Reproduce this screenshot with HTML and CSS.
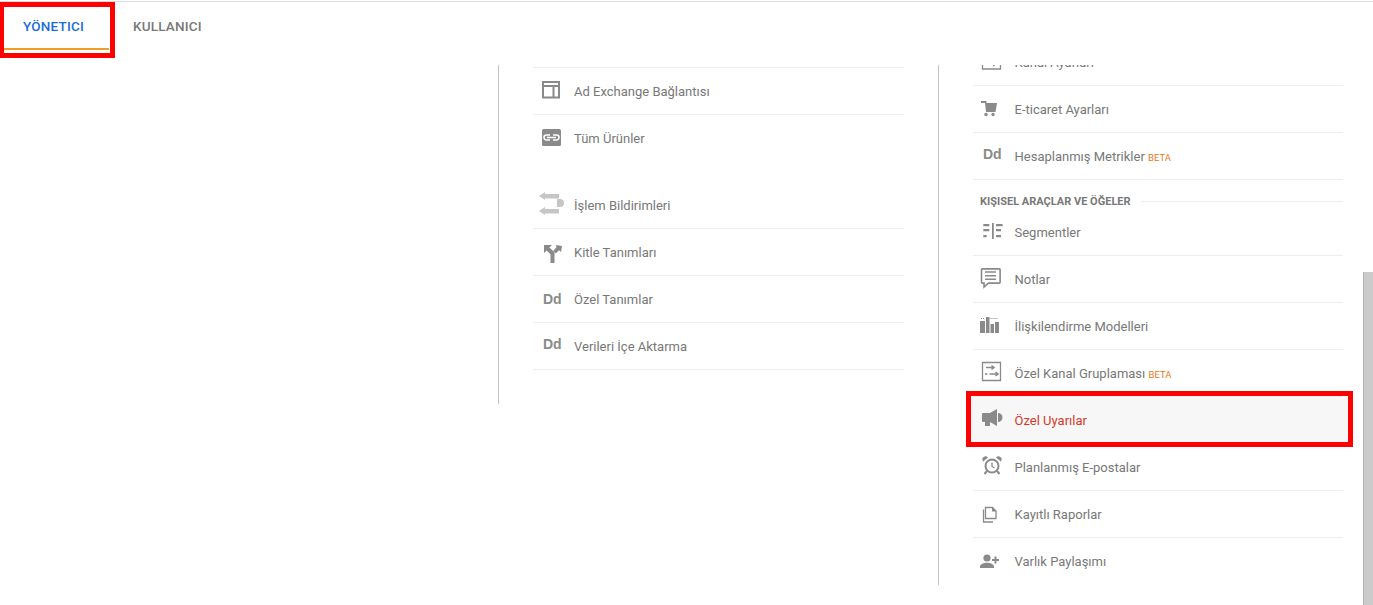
FILE: index.html
```html
<!DOCTYPE html>
<html lang="tr">
<head>
<meta charset="utf-8">
<title>Yönetici</title>
<link rel="stylesheet" href="styles.css">
</head>
<body>
<header class="tabs">
  <div class="tab tab-active">YÖNETICI</div>
  <div class="tab">KULLANICI</div>
</header>
<main class="main">
  <div class="spacer"></div>
  <section class="col col-property">
    <ul class="list list-first">
      <li class="row">
        <svg class="icon" viewBox="0 0 24 24"><path class="line" d="M3 3h16v15.500H3zM3 7h16M13.500 7v11.500"/></svg>
        <span>Ad Exchange Bağlantısı</span>
      </li>
      <li class="row row-last">
        <svg class="icon" viewBox="0 0 24 24"><rect class="fill" x="2" y="2" width="19" height="17" rx="1.500"/><path class="knock" d="M10 8H6.500a2.500 2.500 0 0 0 0 5H10M13 8h3.500a2.500 2.500 0 0 1 0 5H13M7 10.500h9"/></svg>
        <span>Tüm Ürünler</span>
      </li>
    </ul>
    <ul class="list list-second">
      <li class="row">
        <svg class="icon" viewBox="0 0 24 24"><path class="pale" d="M-1 3l6-4v2h14v4.500H5V7zM24 10a4 4 0 0 1-4 4h-3V6h3a4 4 0 0 1 4 4zM-1 18l6-4v2h14v4.500H5V22z"/></svg>
        <span>İşlem Bildirimleri</span>
      </li>
      <li class="row">
        <svg class="icon" viewBox="0 0 24 24"><path class="fill" d="M4 5h8l-2.600 2.600 5.100 4.700V23h-4v-8.800L6.600 10.400 4 13zM16 5l6 1-1 6-2-1.800-3.200 3.200-2.400-2.600 3-3.600z"/></svg>
        <span>Kitle Tanımları</span>
      </li>
      <li class="row">
        <span class="dd">Dd</span>
        <span>Özel Tanımlar</span>
      </li>
      <li class="row">
        <span class="dd dd-up">Dd</span>
        <span>Verileri İçe Aktarma</span>
      </li>
    </ul>
  </section>
  <section class="col col-view">
    <ul class="list list-scrolled">
      <li class="row">
        <svg class="icon" viewBox="0 0 24 24"><path class="line thin" d="M2.500 1h18v18h-18zM7 14h8M13 12l2.500 2-2.500 2M14 6h4M16 4l2 2-2 2"/></svg>
        <span>Kanal Ayarları</span>
      </li>
      <li class="row">
        <svg class="icon" viewBox="0 0 24 24"><path class="fill" d="M1 4h5.500v2H17l-1.500 9H6L5 6H1z"/><circle class="fill" cx="6" cy="17.500" r="1.700"/><circle class="fill" cx="13" cy="17.500" r="1.700"/></svg>
        <span>E-ticaret Ayarları</span>
      </li>
      <li class="row">
        <span class="dd dd-up">Dd</span>
        <span>Hesaplanmış Metrikler <em class="beta">BETA</em></span>
      </li>
    </ul>
    <div class="heading"><span>KIŞISEL ARAÇLAR VE ÖĞELER</span></div>
    <ul class="list">
      <li class="row">
        <svg class="icon" viewBox="0 0 24 24"><path class="fill" d="M3.300 4h6v2.200h-6zM3.300 9h6v2.200h-6zM3.300 15h3.300v2.200H3.300zM12 3h1.800v16H12zM16 4h6.600v2.200H16zM16 9h5v2.200h-5zM16 15h5v2.200h-5z"/></svg>
        <span>Segmentler</span>
      </li>
      <li class="row">
        <svg class="icon" viewBox="0 0 24 24"><path class="line mid" d="M1.500 2.700a.8.8 0 0 1 .8-.8h17a.8.8 0 0 1 .8.8v12.600a.8.8 0 0 1-.8.8H8.500L4 20v-3.900H2.300a.8.8 0 0 1-.8-.8z"/><path class="line mid" d="M5 5h11M5 8.700h11M5 12.200h11"/></svg>
        <span>Notlar</span>
      </li>
      <li class="row">
        <svg class="icon" viewBox="0 0 24 24"><path class="fill" d="M0 7h5v12H0zM6 3h3.500v16H6zM10.500 10H14v9h-3.500zM15 8h4v11h-4z"/><path class="dots" d="M1 4.500h4M10.500 4.500h8"/></svg>
        <span>İlişkilendirme Modelleri</span>
      </li>
      <li class="row">
        <svg class="icon" viewBox="0 0 24 24"><path class="line thin" d="M2.500 1.500h18v18h-18z"/><path class="line mid" d="M6 6.500h7.500M11.500 4.500l2.500 2-2.500 2M9.500 13h8M15.500 11l2.500 2-2.500 2M5 13h2.500"/></svg>
        <span>Özel Kanal Gruplaması <em class="beta">BETA</em></span>
      </li>
      <li class="row row-active">
        <svg class="icon" viewBox="0 0 24 24"><path class="fill" d="M2 6a1 1 0 0 1 1-1h7l7-4v17l-7-4v4H5v-4H3a1 1 0 0 1-1-1zM18 5a4.500 4.500 0 0 1 0 9z"/></svg>
        <span>Özel Uyarılar</span>
      </li>
      <li class="row">
        <svg class="icon" viewBox="0 0 24 24"><circle class="line" cx="12" cy="11" r="6.500"/><path class="line thin" d="M12 7.500v4l2.500 1.500"/><path class="fill" d="M3.200 6.500a3 3 0 0 1 4.800-4zM20.800 6.500a3 3 0 0 0-4.800-4z"/><path class="line" d="M7 16l-2.500 3M17 16l2.500 3"/></svg>
        <span>Planlanmış E-postalar</span>
      </li>
      <li class="row">
        <svg class="icon" viewBox="0 0 24 24"><path class="line thin" d="M5.500 5.500h7l3.500 3.500v7.500H5.500zM3.500 7.500v12.500h9.500"/><path class="fill" d="M12 5l4.500 4.500H12z"/></svg>
        <span>Kayıtlı Raporlar</span>
      </li>
      <li class="row row-last">
        <svg class="icon" viewBox="0 0 24 24"><circle class="fill" cx="7" cy="8" r="3.600"/><path class="fill" d="M0 18v-1.500c0-2.500 4-3.800 7-3.800s7 1.300 7 3.800V18zM12 9h2.500V6.500h2V9H19v2h-2.500v2.500h-2V11H12z"/></svg>
        <span>Varlık Paylaşımı</span>
      </li>
    </ul>
  </section>
  <div class="scrolltrack"><div class="scrollthumb"></div></div>
</main>
<div class="callout callout-tab"></div>
<div class="callout callout-row"></div>
</body>
</html>
```
FILE: styles.css
```css
* { box-sizing: border-box; }
html, body { margin: 0; padding: 0; }
body {
  width: 1373px;
  height: 605px;
  overflow: hidden;
  background: #fff;
  font-family: Roboto, "Liberation Sans", sans-serif;
  font-size: 13px;
  color: #787878;
  position: relative;
}
.tabs {
  height: 64px;
  margin-top: 1px;
  border-top: 1px solid #ddd;
  padding-left: 3px;
  display: flex;
  align-items: flex-start;
}
.tab {
  height: 48px;
  display: flex;
  align-items: center;
  padding: 2px 25px 0 20px;
  font-size: 13.500px;
  font-weight: 500;
  letter-spacing: 0.200px;
  border-bottom: 2px solid transparent;
}
.tab + .tab { margin-left: 4px; padding-left: 20px; }
.tab-active { color: #1a6dd6; border-bottom-color: #f29c1f; }
.main {
  height: 540px;
  display: flex;
  align-items: flex-start;
}
.spacer { width: 498px; flex: none; }
.col {
  flex: none;
  border-left: 1px solid #c4c4c4;
  padding-left: 34px;
  overflow: hidden;
}
.col-property { width: 440px; height: 339px; padding-right: 34px; }
.col-view { width: 410px; height: 520px; padding-right: 5px; }
.list { list-style: none; margin: 0; padding: 0; }
.list-first { margin-top: 2px; border-top: 1px solid #eee; }
.list-second { margin-top: 20px; }
.list-scrolled { margin-top: -26px; }
.row {
  height: 47px;
  display: flex;
  align-items: center;
  padding-left: 7px;
  gap: 10px;
  border-bottom: 1px solid #eee;
  white-space: nowrap;
}
.col-view .row { gap: 10.500px; }
.row-last { border-bottom: 0; }
.row-active {
  margin: 0 -5px 0 -3px;
  padding-left: 10px;
  background: #f7f7f7;
  color: #d43a2a;
}
.icon { width: 24px; height: 24px; flex: none; overflow: visible; }
.fill { fill: #8a8a8a; }
.pale { fill: #c6c6c6; }
.line { fill: none; stroke: #8a8a8a; stroke-width: 2; }
.line.thin { stroke-width: 1.300; }
.line.mid { stroke-width: 1.600; }
.knock { fill: none; stroke: #fff; stroke-width: 1.600; }
.dots { fill: none; stroke: #8a8a8a; stroke-width: 1; stroke-dasharray: 1 1; }
.dd {
  width: 24px;
  flex: none;
  padding-left: 3px;
  font-family: "Liberation Sans", Arial, sans-serif;
  font-weight: 700;
  font-size: 14px;
  line-height: 14px;
  color: #8a8a8a;
}
.dd-up { margin-top: -4px; }
.beta {
  font-style: normal;
  font-size: 9.500px;
  color: #e57a1a;
}
.heading {
  height: 29px;
  margin-left: 7px;
  padding-top: 14px;
  display: flex;
  align-items: center;
  gap: 10px;
  font-size: 11px;
  font-weight: 700;
  white-space: nowrap;
}
.heading::after {
  content: "";
  flex: 1;
  height: 1px;
  background: #eee;
}
.scrolltrack {
  margin-left: auto;
  width: 10px;
  height: 540px;
  padding-top: 207px;
  flex: none;
}
.scrollthumb {
  height: 333px;
  background: #cbcbcb;
  border-left: 1px solid #b4b4b4;
}
.callout {
  position: absolute;
  border: 5px solid #f00;
  pointer-events: none;
}
.callout-tab { left: -1px; top: 2px; width: 116px; height: 56px; }
.callout-row { left: 966px; top: 391px; width: 387px; height: 56px; }
```
